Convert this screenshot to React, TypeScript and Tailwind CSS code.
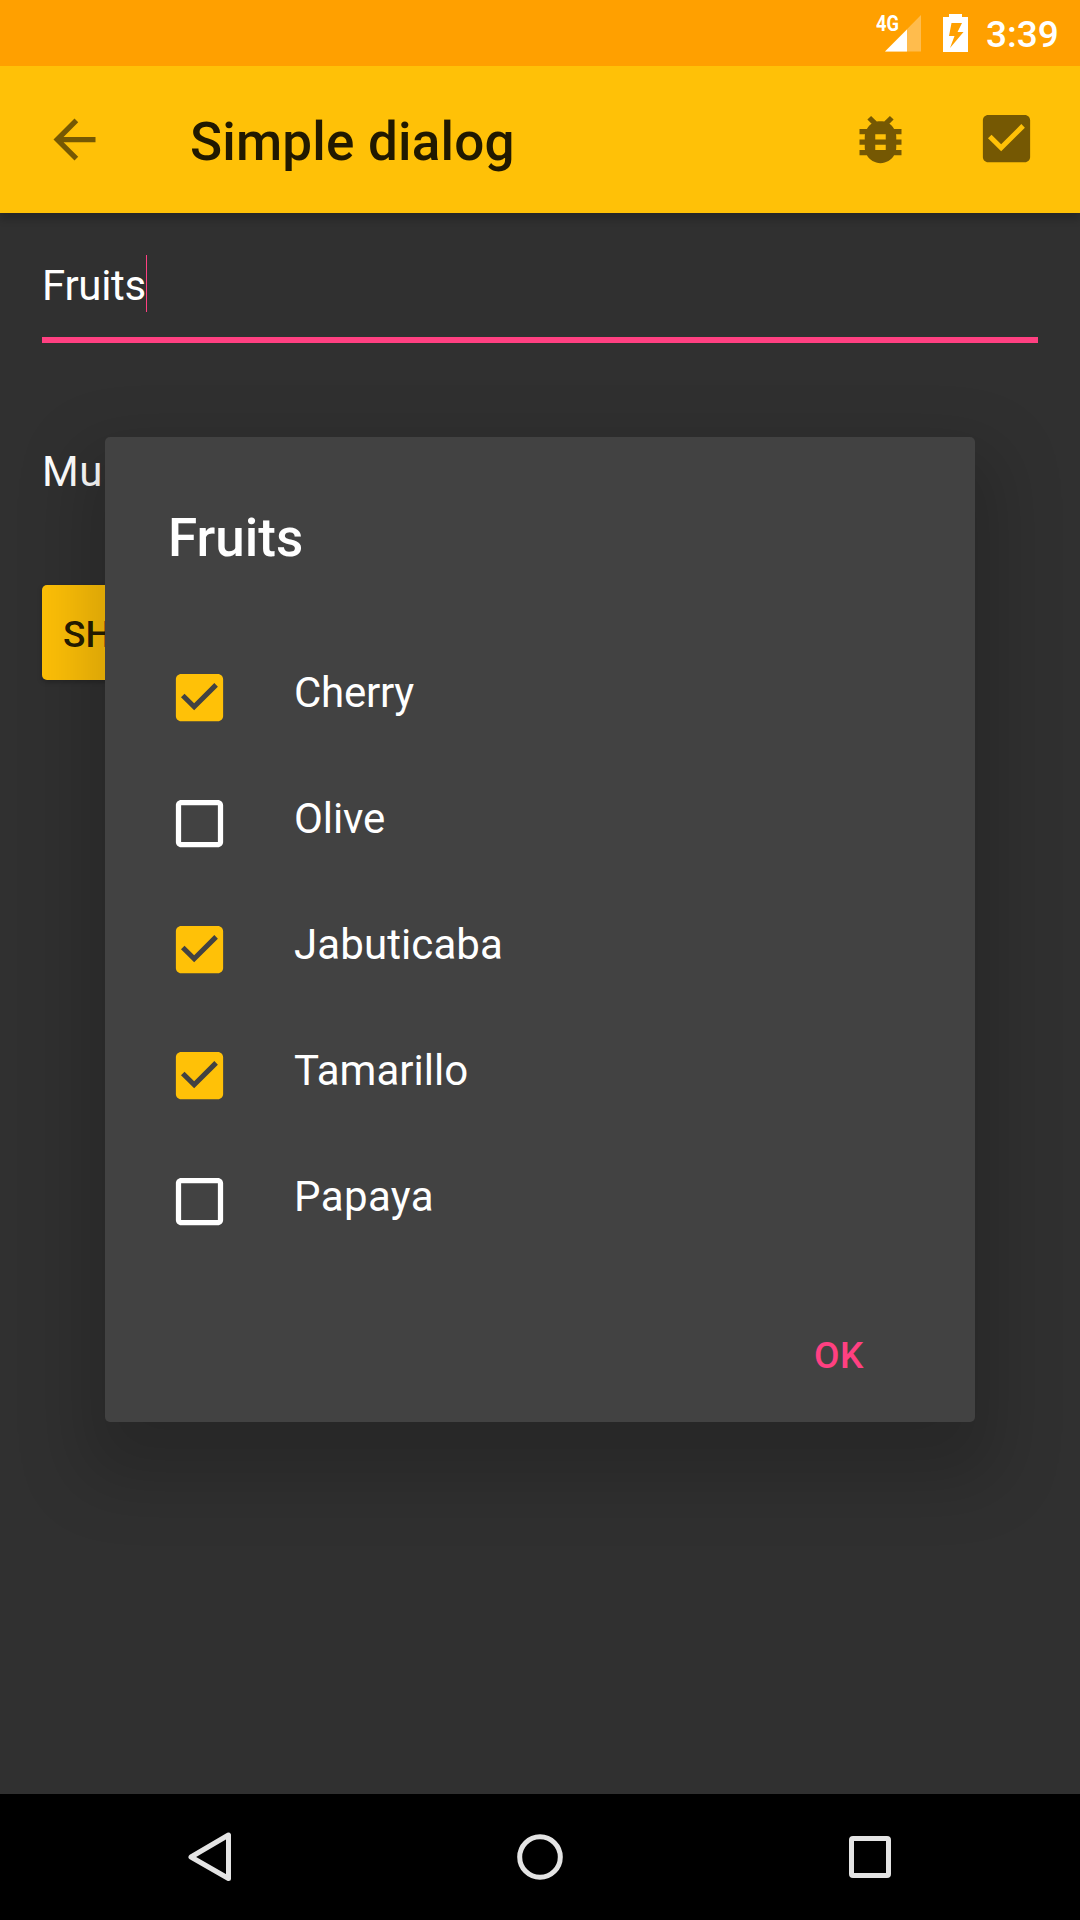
import React from "react";

const CHECK_BOX =
  "M19 3H5c-1.110 0-2 .9-2 2v14c0 1.100.89 2 2 2h14c1.110 0 2-.9 2-2V5c0-1.100-.89-2-2-2zM9.970 16.900L4.950 11.880L6.300 10.530L9.970 14.200L17.650 6.520L19 7.870z";
const UNCHECKED =
  "M19 5v14H5V5h14m0-2H5c-1.1 0-2 .9-2 2v14c0 1.1.9 2 2 2h14c1.1 0 2-.9 2-2V5c0-1.1-.9-2-2-2z";
const BACK = "M20 11H7.83l5.59-5.59L12 4l-8 8 8 8 1.41-1.41L7.83 13H20v-2z";
const BUG =
  "M20 8h-2.81c-.45-.78-1.07-1.45-1.82-1.96L17 4.41 15.59 3l-2.17 2.17C12.96 5.06 12.49 5 12 5c-.49 0-.96.06-1.41.17L8.41 3 7 4.41l1.62 1.63C7.88 6.55 7.26 7.22 6.81 8H4v2h2.09c-.05.33-.09.66-.09 1v1H4v2h2v1c0 .34.04.67.09 1H4v2h2.81c1.04 1.79 2.97 3 5.19 3s4.15-1.21 5.19-3H20v-2h-2.09c.05-.33.09-.66.09-1v-1h2v-2h-2v-1c0-.34-.04-.67-.09-1H20V8zm-6 8h-4v-2h4v2zm0-4h-4v-2h4v2z";

function Icon({ d, className = "" }: { d: string; className?: string }) {
  return (
    <svg viewBox="0 0 24 24" fill="currentColor" fillRule="evenodd" className={`size-[63px] shrink-0 ${className}`}>
      <path d={d} />
    </svg>
  );
}

function StatusBar() {
  return (
    <header className="flex h-[66px] shrink-0 items-start justify-end bg-[#ffa000] text-white">
      <div className="relative mt-[15px] mr-[22px] h-[37px] w-[45px]">
        <svg viewBox="0 0 45 37" className="h-full w-full">
          <path d="M45 0V36.500H9z" fill="#fff" fillOpacity=".3" />
          <path d="M31 14.500V36.500H9z" fill="#fff" />
        </svg>
        <span className="absolute top-[-4px] left-0 origin-left scale-x-[0.85] text-[21.500px] leading-[25px] font-bold">
          4G
        </span>
      </div>
      <svg viewBox="0 0 25 38" className="mt-[14px] h-[38px] w-[25px]">
        <path
          fill="#fff"
          fillRule="evenodd"
          d="M6 0H19V3H25V38H0V3H6zM8.500 9L6 22H11.500L7 34L20.500 18H14.500L19 9z"
        />
      </svg>
      <time className="mt-[14px] mr-[21px] ml-[18px] w-[73px] text-[37px] leading-[42px] font-medium whitespace-nowrap">
        3:39
      </time>
    </header>
  );
}

function AppBar() {
  return (
    <div className="z-10 flex h-[147px] shrink-0 items-center bg-[#ffc107] pr-[42px] pl-[43px] text-black/54 shadow-[0_7px_7px_rgba(0,0,0,0.18)]">
      <Icon d={BACK} />
      <h1 className="mt-[5px] ml-[84px] flex-1 text-[53px] leading-[60px] font-medium tracking-[0.2px] text-black/87">
        Simple dialog
      </h1>
      <Icon d={BUG} className="mr-[63px]" />
      <Icon d={CHECK_BOX} className="-mt-[2px]" />
    </div>
  );
}

const fruits = [
  { name: "Cherry", checked: true, tracking: "tracking-[-0.25px]" },
  { name: "Olive", checked: false, tracking: "tracking-[-0.1px]" },
  { name: "Jabuticaba", checked: true, tracking: "tracking-[0.1px]" },
  { name: "Tamarillo", checked: true, tracking: "tracking-normal" },
  { name: "Papaya", checked: false, tracking: "tracking-[0.4px]" },
];

function FruitDialog() {
  return (
    <section
      role="dialog"
      className="absolute top-[437px] left-[105px] z-20 flex h-[985px] w-[870px] flex-col rounded-[5px] bg-[#424242] px-[63px] shadow-[0_36px_68px_22px_rgba(0,0,0,0.18)]"
    >
      <h2 className="mt-[71px] text-[53px] leading-[60px] font-medium">Fruits</h2>
      <ul className="mt-[66px]">
        {fruits.map((fruit) => (
          <li key={fruit.name} className="flex h-[126px] items-center gap-[63px]">
            <Icon
              d={fruit.checked ? CHECK_BOX : UNCHECKED}
              className={fruit.checked ? "text-[#ffc107]" : "text-white"}
            />
            <span className={`-mt-[9px] text-[42px] leading-[50px] ${fruit.tracking}`}>{fruit.name}</span>
          </li>
        ))}
      </ul>
      <button className="mt-[70px] mr-[48px] self-end text-[37px] leading-[44px] font-medium tracking-[0.6px] text-[#ff4081]">
        OK
      </button>
    </section>
  );
}

function NavBar() {
  return (
    <nav className="flex h-[126px] shrink-0 items-center justify-center gap-[270px] bg-black">
      <svg viewBox="0 0 60 60" className="size-[60px]" fill="none" stroke="#e4e4e4" strokeWidth="5" strokeLinejoin="round">
        <path d="M48.500 8V51.500L11 30z" />
      </svg>
      <svg viewBox="0 0 60 60" className="size-[60px]" fill="none" stroke="#e4e4e4" strokeWidth="5">
        <circle cx="30" cy="30" r="20.300" />
      </svg>
      <svg viewBox="0 0 60 60" className="size-[60px]" fill="none" stroke="#e4e4e4" strokeWidth="5">
        <rect x="11.500" y="11.500" width="37" height="37" rx="1.500" />
      </svg>
    </nav>
  );
}

export default function App() {
  return (
    <div className="relative flex h-[1920px] w-[1080px] flex-col overflow-hidden bg-[#303030] font-['Roboto',sans-serif] text-white">
      <StatusBar />
      <AppBar />
      <main className="flex flex-1 flex-col items-start px-[42px] pt-[42px]">
        <div className="flex h-[88px] w-full items-start border-b-[6px] border-[#ff4081]">
          <span className="mt-[6px] w-[104px] text-[42px] leading-[50px] tracking-[-0.3px] whitespace-nowrap">
            Fruits
          </span>
          <span className="h-[57px] w-px bg-[#ff4081]" />
        </div>
        <p className="mt-[104px] text-[42px] leading-[50px] tracking-[0.6px]">Multi choice</p>
        <button className="mt-[88px] h-[95px] rounded-[5px] bg-[#ffc107] px-[21px] pt-[5px] text-[37px] font-medium text-black/87 shadow-[0_2px_5px_rgba(0,0,0,0.25)]">
          SHOW
        </button>
      </main>
      <FruitDialog />
      <NavBar />
    </div>
  );
}
